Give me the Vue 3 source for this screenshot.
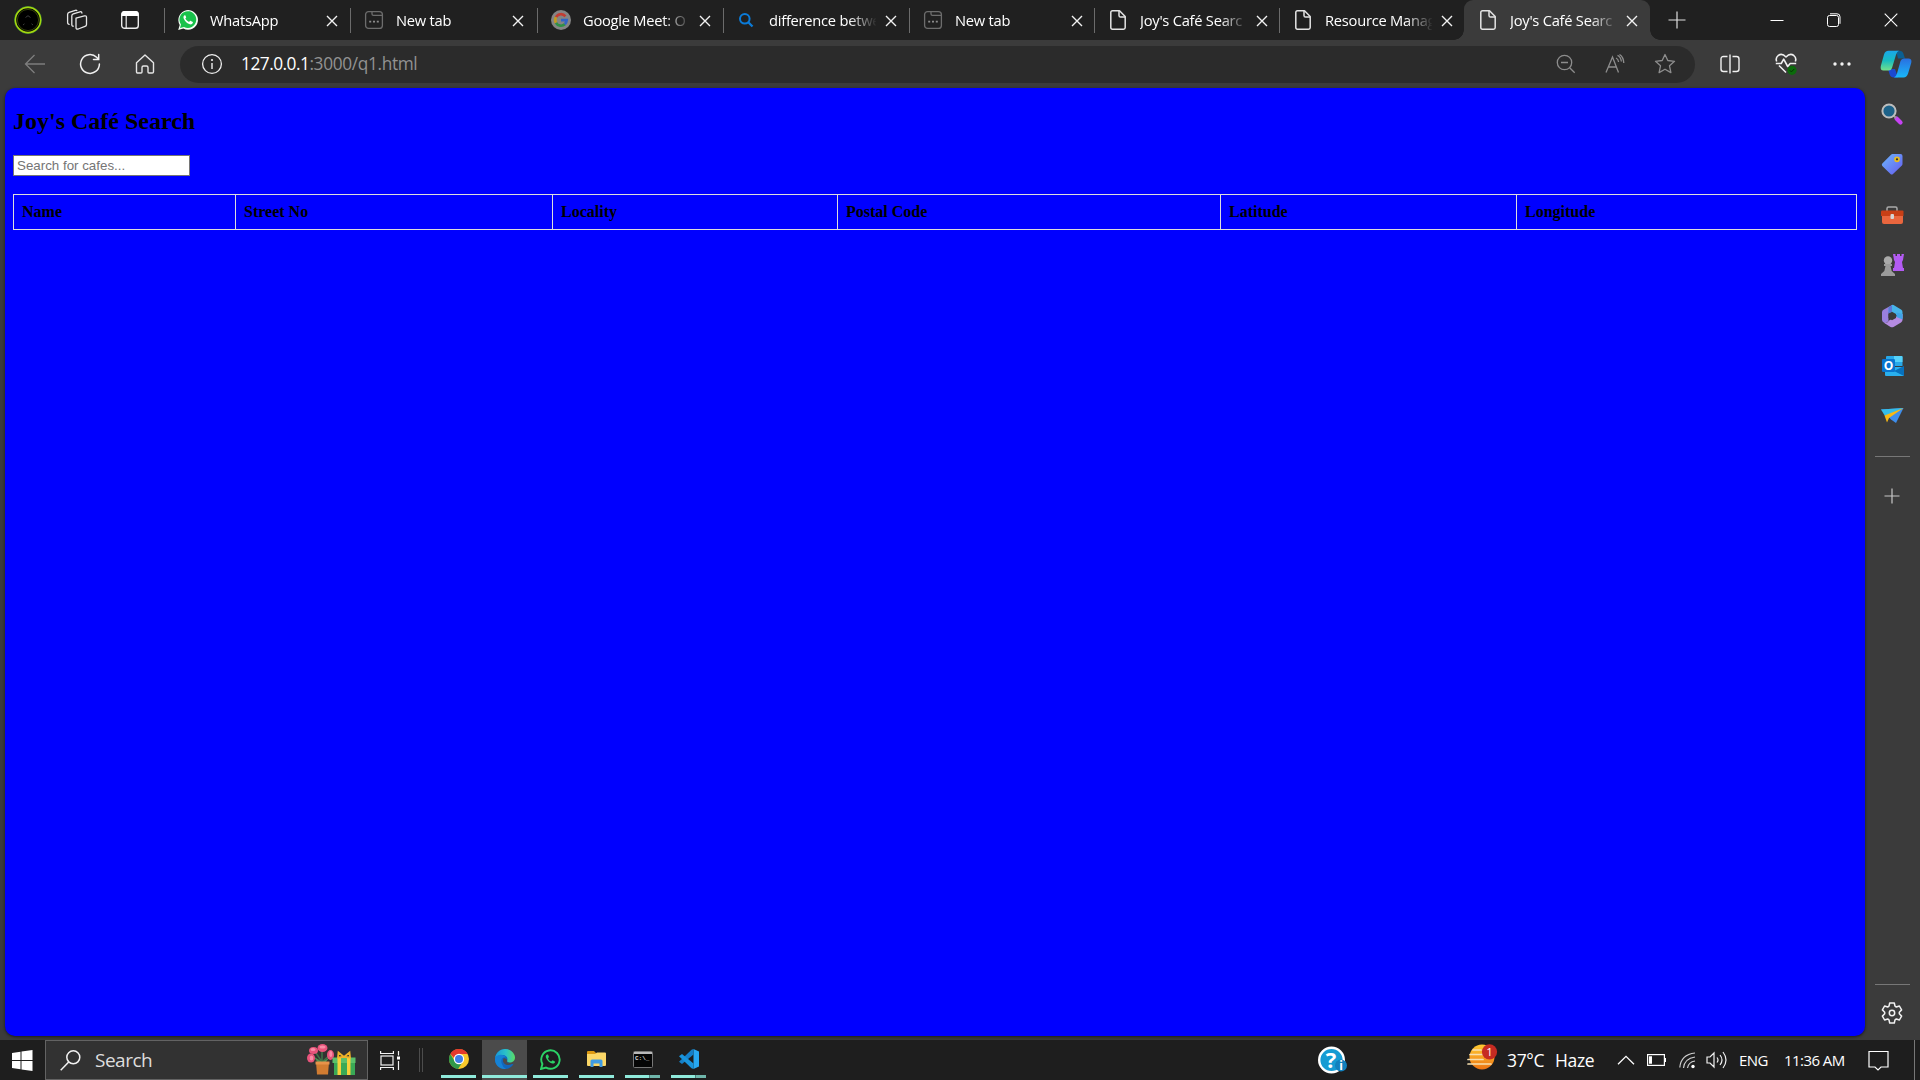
<script setup>
const tabs = [
  { title: 'WhatsApp', icon: 'whatsapp', width: 186 },
  { title: 'New tab', icon: 'newtab', width: 187 },
  { title: 'Google Meet: O', icon: 'google', width: 186 },
  { title: 'difference betwe', icon: 'search', width: 186 },
  { title: 'New tab', icon: 'newtab', width: 185 },
  { title: "Joy's Café Searc", icon: 'file', width: 185 },
  { title: 'Resource Manag', icon: 'file', width: 185 },
  { title: "Joy's Café Searc", icon: 'file', width: 186, active: true },
]
const columns = [
  { label: 'Name', width: 222 },
  { label: 'Street No', width: 317 },
  { label: 'Locality', width: 285 },
  { label: 'Postal Code', width: 383 },
  { label: 'Latitude', width: 296 },
  { label: 'Longitude', width: 340 },
]
</script>

<template>
  <div class="screen">
    <header class="titlebar">
      <div class="left-tools">
        <svg class="avatar" width="30" height="30" viewBox="0 0 30 30">
          <circle cx="15" cy="15" r="13.6" fill="#0c0f04" stroke="#2c6b3c" stroke-width="1" />
          <circle cx="15" cy="15" r="12.6" fill="#050505" stroke="#a5d80f" stroke-width="1.6" />
          <circle cx="15" cy="15" r="10.6" fill="#000" stroke="#35420b" stroke-width="1" />
          <path d="M12.500 12.500l2.500-1.800 2.500 1.800M10 20l1.500-1.200M20 20l-1.500-1.200" stroke="#3c3c3c" fill="none" />
        </svg>
        <svg class="workspaces" width="22" height="22" viewBox="0 0 22 22" fill="none" stroke="#e6e6e6" stroke-width="1.3" stroke-linejoin="round" stroke-linecap="round">
          <path d="M10 9.200l8.400-2.300q2.100-.4 2.100 1.400v7.100q0 1.500-1.500 2l-6.800 2.600q-2.200.6-2.200-1.500z" />
          <path d="M7.300 17.200q-1.500.1-1.500-1.600V6.900q0-1.500 1.500-2l6.600-2.100q1.700-.4 2 1.200" />
          <path d="M3.200 15.300q-1.600 0-1.600-1.700V5.400q0-1.500 1.500-2l6.200-2q1-.3 1.500.1" />
        </svg>
        <svg class="tabactions" width="20" height="20" viewBox="0 0 20 20">
          <rect x="1.7" y="1.7" width="16.6" height="16.6" rx="2.8" fill="none" stroke="#ececec" stroke-width="1.4" />
          <path d="M1.500 6V4q0-3 3-3h11q3 0 3 3v2z" fill="#fff" />
          <path d="M6.200 6v12" stroke="#ececec" stroke-width="1.2" />
        </svg>
      </div>
      <div v-for="(tab, i) in tabs" :key="i" class="tab" :class="{ active: tab.active }" :style="{ width: tab.width + 'px' }">
        <svg v-if="tab.icon === 'whatsapp'" class="favicon" viewBox="0 0 20 20">
          <path d="M.2 19.900l1.500-5A9.800 9.800 0 1 1 5.400 18.500z" fill="#f4fff6" />
          <path d="M2 18l1-3.600a8.400 8.400 0 1 1 3 2.600z" fill="#18c24b" />
          <path d="M6.700 5.200c-1.200.5-1.500 1.900-1 3.200 1.200 3 3.500 5 6.200 5.900 1.500.4 2.800-.4 3-1.700.1-.5-.1-.7-.5-.9l-1.700-.8c-.4-.2-.7-.1-.9.200l-.7.9c-1.700-.6-3-1.800-3.800-3.400l.7-.9c.2-.3.2-.5.1-.8L7.400 5.400c-.1-.2-.3-.3-.7-.2z" fill="#fff" />
        </svg>
        <svg v-else-if="tab.icon === 'newtab'" class="favicon" viewBox="0 0 20 20" fill="none" stroke="#6d6d6d" stroke-width="1.3">
          <rect x="1.6" y="1.6" width="16.8" height="16.8" rx="3" />
          <path d="M8 1.600v2.400q0 1.400 1.400 1.400h9" />
          <path d="M5.200 11.600h2M9 11.600h2M12.800 11.600h2" stroke="#8b8b8b" stroke-width="1.8" />
        </svg>
        <svg v-else-if="tab.icon === 'google'" class="favicon" viewBox="0 0 20 20" fill="none" stroke-width="2.7">
          <circle cx="10" cy="10" r="10" fill="#858585" />
          <path d="M14.400 6.300A5.700 5.700 0 0 0 5 7.200" stroke="#c33c32" />
          <path d="M5 7.200a5.700 5.700 0 0 0 0 5.600" stroke="#c29a20" />
          <path d="M5 12.800a5.700 5.700 0 0 0 8.800 1.500" stroke="#2f9146" />
          <path d="M10 10.200h5.700q-.2 2.600-1.900 4.100" stroke="#3264c6" />
        </svg>
        <svg v-else-if="tab.icon === 'search'" class="favicon search-favicon" viewBox="0 0 20 20" fill="none" stroke="#0b7bd8" stroke-width="2">
          <circle cx="8.8" cy="8.8" r="4.8" />
          <path d="M12.300 12.300l4.200 4.200" stroke-width="2.3" />
        </svg>
        <svg v-else class="favicon" viewBox="0 0 20 20" fill="none" stroke="#e4e4e4" stroke-width="1.5" stroke-linejoin="round">
          <path d="M4.500.8h7L17.200 6.500v11q0 1.700-1.700 1.700h-11q-1.700 0-1.700-1.700v-15Q2.800.8 4.500.8z" />
          <path d="M11 1v4.400q0 1.600 1.600 1.600H17" />
        </svg>
        <span class="tab-title">{{ tab.title }}</span>
        <svg class="close" width="12" height="12" viewBox="0 0 12 12"><path d="M1 1l10 10M11 1L1 11" stroke="#f2f2f2" stroke-width="1.4" /></svg>
      </div>
      <svg class="newtab" width="18" height="18" viewBox="0 0 18 18"><path d="M9 .5v17M.5 9h17" stroke="#e0e0e0" stroke-width="1.2" /></svg>
      <div class="window-controls">
        <svg width="14" height="14" viewBox="0 0 14 14"><path d="M.5 7.500h13" stroke="#fff" /></svg>
        <svg width="14" height="14" viewBox="0 0 14 14" fill="none" stroke="#fff"><rect x=".5" y="2.5" width="11" height="11" rx="2" /><path d="M3 .8h7q3 0 3 3v7" /></svg>
        <svg width="14" height="14" viewBox="0 0 14 14"><path d="M.7.7l12.600 12.600M13.300.7L.7 13.300" stroke="#fff" stroke-width="1.1" /></svg>
      </div>
    </header>

    <div class="toolbar">
      <svg class="back" width="22" height="20" viewBox="0 0 22 20" fill="none" stroke="#7e7e7e" stroke-width="1.3"><path d="M21 10H1.500M10.500 1L1.500 10l9 9" /></svg>
      <svg class="reload" width="22" height="22" viewBox="0 0 22 22" fill="none" stroke="#f0f0f0" stroke-width="1.5" stroke-linecap="round"><path d="M20.400 11A9.400 9.400 0 1 1 17.600 4.300l1.900 1.900M19.700 1.500v5h-5.200" /></svg>
      <svg class="home" width="20" height="20" viewBox="0 0 20 20" fill="none" stroke="#e6e6e6" stroke-width="1.4" stroke-linejoin="round"><path d="M1.500 8.700L10 1l8.500 7.700v9q0 1.300-1.300 1.300h-3.200q-1 0-1-1v-4.500q0-1.500-1.500-1.500h-3Q7 12 7 13.500V18q0 1-1 1H2.800q-1.300 0-1.300-1.300z" /></svg>
      <div class="address">
        <svg class="info" width="22" height="22" viewBox="0 0 22 22"><circle cx="11" cy="11" r="9.4" fill="none" stroke="#efefef" stroke-width="1.3" /><path d="M11 10v6" stroke="#efefef" stroke-width="1.4" /><circle cx="11" cy="7" r="1.1" fill="#efefef" /></svg>
        <span class="url"><b>127.0.0.1</b><i>:3000/q1.html</i></span>
        <div class="address-icons">
          <svg width="20" height="20" viewBox="0 0 20 20" fill="none" stroke="#8d8d8d" stroke-width="1.3"><circle cx="8.5" cy="8.5" r="7.2" /><path d="M5 8.500h7M13.700 13.700l5 5" /></svg>
          <svg width="20" height="20" viewBox="0 0 20 20" fill="none" stroke="#8d8d8d" stroke-width="1.3"><path d="M1 18.500L7.500 3l6 15.500M3.300 13h8.200M11 4q2.300 1 2.600 4M12.500 1.300q3.300 1.500 3.900 6.200M14.500.5q4 2.500 4.300 8.500" /></svg>
          <svg width="22" height="22" viewBox="0 0 22 22" fill="none" stroke="#8d8d8d" stroke-width="1.3" stroke-linejoin="round"><path d="M11 1.500l2.800 6 6.700.8-5 4.500 1.400 6.800-5.900-3.400-5.900 3.400 1.400-6.800-5-4.500 6.700-.8z" /></svg>
        </div>
      </div>
      <svg class="split" width="20" height="20" viewBox="0 0 20 20" fill="none" stroke="#f0f0f0" stroke-width="1.4"><path d="M7.500 2.500h-4Q1 2.500 1 5v10q0 2.500 2.500 2.500h4M12.500 2.500h4Q19 2.500 19 5v10q0 2.500-2.500 2.500h-4M10 .5v19" /></svg>
      <svg class="health" width="22" height="22" viewBox="0 0 22 22" fill="none" stroke="#f0f0f0" stroke-width="1.6" stroke-linejoin="round"><path d="M1.700 8.500Q.2 5 3.200 2.500 7-.2 11 4q4-4.200 7.800-1.500 3 2.500 1.500 6M.8 10.500h5.400l2.500-4.300 4 7.300 2.500-3h6M4 12.500l7 7" /><circle cx="17" cy="17.3" r="4.6" fill="#0b6b0b" stroke="none" /><path d="M14.800 17.300l1.600 1.600 3-3" stroke="#062f06" stroke-width="1" /></svg>
      <svg class="more" width="18" height="6" viewBox="0 0 18 6" fill="#f2f2f2"><circle cx="2" cy="3" r="1.7" /><circle cx="9" cy="3" r="1.7" /><circle cx="16" cy="3" r="1.7" /></svg>
      <svg class="copilot" width="32" height="28" viewBox="0 0 32 28">
        <defs>
          <linearGradient id="cpa" x1="0" y1="0" x2="0" y2="1"><stop offset="0" stop-color="#1aa7ea" /><stop offset=".5" stop-color="#18bcc0" /><stop offset="1" stop-color="#74e08a" /></linearGradient>
          <linearGradient id="cpb" x1="0" y1="0" x2="0" y2="1"><stop offset="0" stop-color="#2a6fe0" /><stop offset="1" stop-color="#19b8fa" /></linearGradient>
        </defs>
        <path d="M16 .8h4q2.500 0 3.300 2.500L25 8.500h-7z" fill="#0b5f92" />
        <path d="M8 19h7l3 8.500h-4q-3.500 0-4.300-3z" fill="#1b49d0" />
        <path d="M8.500.8H19q-2 .6-3 4L12 18q-.8 2.500-3.500 2.500h-5Q0 20.500.8 16L4 4.500Q5.200.8 8.500.8z" fill="url(#cpa)" />
        <path d="M23.500 27.500H14q2-.6 3-4L20.500 11q.8-2.500 3.500-2.500h4.500q3.700 0 2.700 4.500L28 23.800q-1.200 3.700-4.500 3.700z" fill="url(#cpb)" />
      </svg>
    </div>

    <div class="middle">
      <main class="page">
        <h2>Joy's Café Search</h2>
        <input type="text" placeholder="Search for cafes..." />
        <table>
          <colgroup><col v-for="c in columns" :key="c.label" :style="{ width: c.width + 'px' }" /></colgroup>
          <thead><tr><th v-for="c in columns" :key="c.label">{{ c.label }}</th></tr></thead>
        </table>
      </main>
      <aside class="sidebar">
        <svg width="24" height="24" viewBox="0 0 24 24"><path d="M16.500 16.500l4 4" stroke="#c742f5" stroke-width="4.2" stroke-linecap="round" /><path d="M13 13l3 3" stroke="#999" stroke-width="2" /><circle cx="9" cy="9" r="6.6" fill="#1d6289" stroke="#bdbdbd" stroke-width="2" /></svg>
        <svg width="24" height="24" viewBox="0 0 24 24"><defs><linearGradient id="tag" x1="0" y1="0" x2="1" y2="1"><stop offset="0" stop-color="#6cb8fb" /><stop offset="1" stop-color="#655af0" /></linearGradient></defs><path d="M12.500 2h8q2 0 2 2v8q0 .8-.6 1.500L13 22q-1.300 1-2.500 0L2.300 14q-1-1.200 0-2.400L11 2.700q.6-.7 1.500-.7z" fill="url(#tag)" /><circle cx="17" cy="7.3" r="2" fill="#333" stroke="#e8bd20" stroke-width="1.7" /></svg>
        <svg width="24" height="24" viewBox="0 0 24 24"><path d="M7 8V5.500q0-1.500 1.500-1.500h7Q17 4 17 5.500V8" fill="none" stroke="#aaa" stroke-width="1.5" /><path d="M2 12h21v7q0 2-2 2H4q-2 0-2-2z" fill="#e9663e" /><path d="M2.500 7.500h20q1 0 1 1V13H1V8.500q0-1 1.500-1z" fill="#c83f16" /><rect x="10.5" y="11" width="3.5" height="5" rx="1" fill="#d5d5d5" /></svg>
        <svg width="24" height="24" viewBox="0 0 24 24"><path d="M13 1h2.500v2H17V1h3v2h1.500V1H24l-1 6-1 2 1 6h1v3H13v-3h1l1-6-1-2z" fill="#b35bf3" /><circle cx="8" cy="7.5" r="4.2" fill="#aaa" /><path d="M4 11h8v2h-1.500l1.200 5L15 21v2H1v-2l3.300-3 1.200-5H4z" fill="#9b9b9b" /></svg>
        <svg width="24" height="24" viewBox="0 0 24 24"><path d="M12 1L3.500 5.700Q2 6.600 2 8.200v7.600q0 1.600 1.500 2.500l1.800 1 3.200-2V8.700L16 4z" fill="#9a80de" /><path d="M12 1q.8-.3 1.600.1l7.400 4.300q1.500.9 1.500 2.500v6.300L16.500 11 8.500 8V4z" fill="#46b4ea" /><path d="M8.500 3.500L12 1v6.500L8.500 10z" fill="#5d78d6" /><path d="M22.500 10v6q0 1.500-1.500 2.400l-7.500 4.500q-1.500.8-3 0l-7-4.500q4 1.500 5.500-2l7.500-4z" fill="#b58be2" /><path d="M16.500 8.500l6 1.500v5.500l-6-2.500z" fill="#3fa4e8" /><path d="M12 7.800l4 2.200v4L12 16.200 8.500 14v-4z" fill="#3b3b3b" /></svg>
        <svg width="24" height="24" viewBox="0 0 24 24"><path d="M7 2h14.500q1 0 1 1v9H6V3q0-1 1-1z" fill="#28a8e8" /><path d="M14 2h7.500q1 0 1 1v5H14z" fill="#55d2fa" /><path d="M5 13h19v8q0 1-1 1H6q-1 0-1-1z" fill="#29b0ee" /><path d="M24 12v10L14 17z" fill="#0870bc" /><rect x="2" y="5" width="13" height="13" rx="1.3" fill="#0875cf" /><text x="8.5" y="15.8" text-anchor="middle" class="outlook-letter">O</text></svg>
        <svg width="24" height="24" viewBox="0 0 24 24"><path d="M1 5.500L23.500 4 16 19l-5-3.500z" fill="#3e8eed" /><path d="M1 5.500L23.500 4 5 12z" fill="#35bde8" /><path d="M4.500 11.500L23.500 4 9 14l-2 4.500z" fill="#f9b914" /></svg>
        <hr />
        <svg class="add" width="16" height="16" viewBox="0 0 16 16"><path d="M8 .5v15M.5 8h15" stroke="#c8c8c8" stroke-width="1.2" /></svg>
        <hr class="bottom-rule" />
        <svg class="gear" width="22" height="22" viewBox="0 0 22 22" fill="none" stroke="#f2f2f2" stroke-width="1.5" stroke-linejoin="round"><path d="M8.700 1h4.600l.7 3.200 1.300.8 3.100-1 2.200 3.900-2.300 2.300v1.600l2.300 2.300-2.200 3.900-3.100-1-1.300.8-.7 3.200H8.700L8 17.800 6.700 17l-3.100 1-2.200-3.900 2.300-2.300v-1.600L1.400 7.900 3.600 4l3.100 1L8 4.200z" /><circle cx="11" cy="11" r="2.7" /></svg>
      </aside>
    </div>

    <footer class="taskbar">
      <div class="start"><svg width="21" height="21" viewBox="0 0 21 21" fill="#fff"><path d="M0 3l8.500-1.300V10H0zM9.500 1.500L20.500 0v10h-11zM0 11h8.500v8.300L0 18zM9.500 11h11v10l-11-1.500z" /></svg></div>
      <div class="search">
        <svg class="glass" width="21" height="21" viewBox="0 0 21 21" fill="none" stroke="#f2f2f2" stroke-width="1.5"><circle cx="13.3" cy="7.3" r="6.5" /><path d="M8.700 12L.7 20.300" /></svg>
        <span>Search</span>
        <svg class="flowers" width="50" height="32" viewBox="0 0 50 32">
          <g stroke="#3f7448" stroke-width="1.5" fill="none"><path d="M14 18L5 12M15 18L7 6M15 18V5M15 18l9-8" /></g>
          <path d="M7 13l8 5 8-5-5 6h-7z" fill="#4f9053" />
          <g fill="#e8547c"><ellipse cx="6.5" cy="6.5" rx="4.5" ry="3.5" /><ellipse cx="15.5" cy="4" rx="5" ry="4" /><ellipse cx="4" cy="14" rx="4" ry="4.5" /><ellipse cx="23.5" cy="11" rx="3.5" ry="5" /></g>
          <g fill="#f78ca5"><ellipse cx="6" cy="5.5" rx="2.5" ry="1.5" /><ellipse cx="15.5" cy="3" rx="3" ry="1.5" /><ellipse cx="4.5" cy="14" rx="1.8" ry="2.5" /><ellipse cx="23.8" cy="10" rx="1.5" ry="3" /></g>
          <path d="M9 18h13l-1 12.500H10z" fill="#d17c31" /><path d="M8.500 17.500h14v3h-14z" fill="#e6934a" />
          <path d="M27 17h21v14H27z" fill="#39a956" /><path d="M25.500 13.500h23v5.500h-23z" fill="#5bc06a" />
          <path d="M30.500 13.500h3.500V31h-3.500zM40 13.500h3.500V31H40z" fill="#f6cf3b" />
          <path d="M37 13l-5.500-4.500-.5 5zM37 13l5.500-4.500.5 5z" fill="none" stroke="#efb428" stroke-width="1.8" />
        </svg>
      </div>
      <svg class="taskview" width="23" height="21" viewBox="0 0 23 21" fill="none" stroke="#f2f2f2" stroke-width="1.2"><rect x="1" y="6" width="12" height="9" /><path d="M.6 1v2.500h12.800V1M.6 20v-2.500h12.800V20M18.500 1v4.500M18.500 11v9" /><path d="M17 6.500h3v3h-3z" fill="#fff" stroke="none" /></svg>
      <div class="grip"></div>
      <div class="apps">
        <div class="app"><svg width="20" height="20" viewBox="0 0 20 20"><circle cx="10" cy="10" r="10" fill="#f9c82b" /><path d="M1.300 5A10 10 0 0 1 18.700 5H10L7 11z" fill="#e4392c" /><path d="M1.300 5A10 10 0 0 0 9 20l5-7.500-8 0z" fill="#30984a" /><circle cx="10" cy="10" r="5.2" fill="#fff" /><circle cx="10" cy="10" r="4" fill="#3f7ee8" /></svg></div>
        <div class="app current"><svg width="20" height="20" viewBox="0 0 20 20"><defs><linearGradient id="edge" x1="0" y1="0" x2="1" y2="0"><stop offset="0" stop-color="#1897d8" /><stop offset=".55" stop-color="#2bc2c8" /><stop offset="1" stop-color="#5bdd62" /></linearGradient></defs><circle cx="10" cy="10" r="10" fill="#1267bd" /><path d="M20 8.500v5l-1.500 1.500-4 .2-2-3z" fill="#4b4b4b" /><path d="M0 9.500C.5 4 5 0 10 0c6 0 10 4.500 10 8.500 0 3.500-2.500 5-5 5-2 0-3.500-.5-3-1.500C13.500 9 11 6 7.500 6 4 6 1 7.500 0 9.500z" fill="url(#edge)" /><path d="M8.800 9c-2.600 3.500 1.200 8 6 6.800l3-1.300q-5.500 1-5.800-2.500 1-2-3.200-3z" fill="#4b4b4b" /><path d="M0 9.500C1.500 5 9 4.500 11 8.500 8 7.500 5.500 10 6.500 14q1 4 4.500 6C4 20.500-.5 15 0 9.500z" fill="#1682d5" /></svg></div>
        <div class="app"><svg width="21" height="21" viewBox="0 0 21 21"><path d="M1 20l1.400-5A9.200 9.200 0 1 1 6 18.600z" fill="none" stroke="#2bd366" stroke-width="1.9" /><path d="M7 5.500c-1.200.5-1.500 1.900-1 3.200 1.200 3 3.500 4.900 6.200 5.700 1.500.4 2.800-.4 3-1.700l-2.500-1.500-1.500 1.300C9.500 12 8.700 11 8 9.200l1-1.300-1-2.400z" fill="#2bd366" /></svg></div>
        <div class="app"><svg width="19" height="18" viewBox="0 0 19 18"><path d="M0 2q0-1 1-1h6l2 2v3H0z" fill="#dd9a12" /><path d="M0 4h8l2-1.500h8q1 0 1 1V15q0 1-1 1H1q-1 0-1-1z" fill="#fbd767" /><path d="M3.500 17v-6q0-1.500 1.500-1.500h9q1.500 0 1.500 1.500v6h-3v-3.500h-6V17z" fill="#3f9be3" /></svg></div>
        <div class="app split-app"><svg width="20" height="17" viewBox="0 0 20 17"><rect x=".5" y=".5" width="19" height="16" rx="1" fill="#050505" stroke="#777" /><path d="M1 1h18v2H1z" fill="#b9b9b9" /><text x="2" y="9" class="cmd-text">C:\_</text></svg></div>
        <div class="app split-app"><svg width="20" height="20" viewBox="0 0 20 20"><path d="M14.500 0L20 2.500v15L14.500 20z" fill="#27a8f2" /><path d="M14.500 0v5.500L3 15 0 12.700 12.500.7z" fill="#1580c8" /><path d="M14.500 20v-5.500L3 5 0 7.300l12.500 12z" fill="#1994dc" /></svg></div>
      </div>
      <svg class="help" width="30" height="28" viewBox="0 0 30 28"><circle cx="13.5" cy="14" r="12.3" fill="#159bd3" stroke="#fff" stroke-width="2.4" /><text x="13" y="22" text-anchor="middle" class="help-mark">?</text><circle cx="23" cy="19.5" r="6" fill="#1180bd" /><text x="23" y="24" text-anchor="middle" class="help-info">i</text></svg>
      <svg class="haze" width="31" height="27" viewBox="0 0 31 27"><defs><linearGradient id="sun" x1="0" y1="0" x2="0" y2="1"><stop offset="0" stop-color="#ffcb32" /><stop offset="1" stop-color="#ee7412" /></linearGradient></defs><circle cx="15" cy="13" r="12.5" fill="url(#sun)" /><path d="M6 6h8M3 10.500h14M1 15.500h15M1 20h23" stroke="#f7dfae" stroke-width="1.7" stroke-linecap="round" /><circle cx="22.5" cy="7.8" r="7.6" fill="#c62b22" /><text x="22.5" y="12" text-anchor="middle" class="badge-text">1</text></svg>
      <span class="weather temp">37°C</span><span class="weather cond">Haze</span>
      <svg class="chev" width="18" height="10" viewBox="0 0 18 10"><path d="M1 9.300l8-8 8 8" fill="none" stroke="#fff" stroke-width="1.3" /></svg>
      <svg class="battery" width="20" height="12" viewBox="0 0 20 12"><rect x=".6" y=".6" width="16.8" height="10.8" fill="none" stroke="#fff" stroke-width="1.2" /><path d="M2 2.200h3v7.600H2zM18 4h1v4h-1z" fill="#fff" /></svg>
      <svg class="wifi" width="17" height="17" viewBox="0 0 17 17" fill="none" stroke="#cfcfcf" stroke-width="1.2"><path d="M.8 15.500Q2 2.500 16 1M4.500 16Q5.500 6.500 16 5M8.500 16Q9.500 10 16 9" /><circle cx="14" cy="14.5" r="1.7" fill="#fff" stroke="none" /></svg>
      <svg class="sound" width="21" height="18" viewBox="0 0 21 18" fill="none" stroke="#f0f0f0" stroke-width="1.2"><path d="M1 6h3l4-4v14l-4-4H1zM11 6.500q2 2.500 0 5M14 4q4 5 0 10M17 1q6 8 0 16" /></svg>
      <span class="lang">ENG</span>
      <span class="clock">11:36 AM</span>
      <svg class="notify" width="21" height="21" viewBox="0 0 21 21"><path d="M1 1.500h19v15.500h-7l-3 3-3-3H1z" fill="none" stroke="#fff" stroke-width="1.2" /></svg>
      <div class="desktop-edge"></div>
    </footer>
  </div>
</template>

<style>
body { background: #3b3b3b; overflow: hidden; }
</style>

<style scoped>
.screen { width: 1920px; height: 1080px; display: flex; flex-direction: column; background: #3b3b3b; font-family: "Open Sans", "Noto Sans", sans-serif; color: #fff; overflow: hidden; }
svg { display: block; flex: none; }
.titlebar { height: 40px; flex: none; display: flex; align-items: center; background: #202020; }
.left-tools { width: 164px; flex: none; display: flex; align-items: center; padding-left: 13px; box-sizing: border-box; }
.workspaces { margin-left: 23px; }
.tabactions { margin-left: 32px; }
.tab { height: 40px; flex: none; position: relative; display: flex; align-items: center; box-sizing: border-box; padding-left: 14px; }
.tab::before { content: ""; position: absolute; left: 0; top: 8px; width: 1px; height: 25px; background: #6b6b6b; }
.tab.active::before { left: -10px; top: auto; bottom: 0; width: 206px; height: 10px; background: radial-gradient(circle at 0 0, transparent 9.5px, #3b3b3b 10px) left / 10px 10px no-repeat, radial-gradient(circle at 100% 0, transparent 9.5px, #3b3b3b 10px) right / 10px 10px no-repeat; }
.tab.active { background: #3b3b3b; border-radius: 9px 9px 0 0; }
.favicon { width: 20px; height: 20px; }
.search-favicon { margin-left: -1px; margin-right: 1px; }
.tab-title { width: 107px; margin-left: 12px; margin-top: -1px; white-space: nowrap; font-size: 14.7px; line-height: 24px; letter-spacing: -0.25px; -webkit-mask-image: linear-gradient(90deg, #000 80px, transparent 108px); mask-image: linear-gradient(90deg, #000 80px, transparent 108px); }
.close { margin-left: 9px; margin-top: 1px; }
.newtab { margin-left: 18px; }
.window-controls { margin-left: 84px; display: flex; gap: 43px; }
.toolbar { height: 48px; flex: none; display: flex; align-items: center; }
.back { margin-left: 24px; margin-bottom: 1px; }
.reload { margin-left: 33px; }
.home { margin-left: 34px; }
.address { margin-left: 25px; width: 1515px; height: 37px; border-radius: 19px; background: #2b2b2b; display: flex; align-items: center; box-sizing: border-box; padding-left: 21px; }
.url { margin-left: 18px; font-size: 17.3px; line-height: 26px; white-space: nowrap; }
.url b { font-weight: 400; letter-spacing: -0.5px; }
.url i { font-style: normal; color: #929292; letter-spacing: -0.35px; }
.address-icons { display: flex; align-items: center; margin-left: auto; gap: 29px; margin-right: 19px; }
.split { margin-left: 25px; }
.health { margin-left: 35px; }
.more { margin-left: 36px; }
.copilot { margin-left: 29px; }
.middle { height: 952px; flex: none; display: flex; padding-left: 5px; box-sizing: border-box; }
.page { width: 1860px; height: 948px; border-radius: 10px; background: #00f; box-sizing: border-box; padding: 19px 8px 0; color: #000; font-family: "Liberation Serif", serif; font-size: 16px; box-shadow: 0 1px 3px #1c1c1c; }
h2 { margin: 0 0 20px; font-size: 24px; line-height: 28px; }
input { display: block; box-sizing: border-box; width: 177px; height: 21px; border: 1px solid #767676; border-radius: 0; padding: 1px 3px; font: 13.333px "Liberation Sans", sans-serif; background: #fff; }
input::placeholder { color: #757575; opacity: 1; }
table { margin-top: 18px; width: 1844px; table-layout: fixed; border-collapse: collapse; }
th { border: 1px solid #ddd; padding: 8px; height: 18px; line-height: 18px; text-align: left; }
.sidebar { width: 53px; display: flex; flex-direction: column; align-items: center; padding-top: 14px; box-sizing: border-box; gap: 26.4px; }
.sidebar hr { width: 35px; height: 1px; border: 0; margin: 1.5px 0 0 1px; background: #777; }
.sidebar .add { margin-top: 4px; }
.sidebar .bottom-rule { margin-top: auto; }
.sidebar .gear { margin: -9px 0 16px; }
.outlook-letter { font: 700 12px "Open Sans", sans-serif; fill: #fff; }
.taskbar { height: 40px; flex: none; display: flex; align-items: center; background: #1e1e1e; }
.start { width: 45px; flex: none; display: flex; justify-content: center; box-sizing: border-box; }
.search { width: 323px; height: 40px; flex: none; box-sizing: border-box; border: 1px solid #636363; background: #323232; display: flex; align-items: center; padding-left: 14px; font-size: 19px; letter-spacing: -0.5px; color: #dedede; }
.search span { margin-left: 14px; }
.flowers { margin-left: auto; margin-right: 10px; }
.taskview { margin-left: 12px; }
.grip { width: 2px; height: 24px; margin-left: 16px; border: solid #4c4c4c; border-width: 0 1px; }
.apps { display: flex; margin-left: 13px; gap: 1px; }
.app { width: 45px; height: 40px; display: flex; align-items: center; justify-content: center; position: relative; padding-bottom: 2px; box-sizing: border-box; }
.app::after { content: ""; position: absolute; left: 5px; bottom: 2px; width: 35px; height: 3px; background: #8feadb; }
.app.current { background: #4b4b4b; }
.app.current::after { left: 0; width: 45px; }
.split-app::after { background: linear-gradient(90deg, #8feadb 24px, #4d817b 24px, #4d817b 25px, #6fb6ab 25px); }
.cmd-text { font: 700 6px "Liberation Mono", monospace; fill: #ddd; }
.help { margin-left: 607px; }
.help-mark { font: 700 22px "Open Sans", sans-serif; fill: #fff; }
.help-info { font: 700 12px "Open Sans", sans-serif; fill: #fff; }
.haze { margin-left: 119px; margin-bottom: 5px; }
.badge-text { font: 11.5px "Open Sans", sans-serif; fill: #fff; }
.weather { font-size: 17.5px; line-height: 26px; white-space: nowrap; letter-spacing: -0.35px; }
.temp { margin-left: 9px; width: 48px; }
.cond { width: 60px; }
.chev { margin-left: 2px; }
.battery { margin-left: 12px; }
.wifi { margin-left: 12px; }
.sound { margin-left: 10px; }
.lang { margin-left: 12px; width: 45px; font-size: 15px; letter-spacing: -0.6px; }
.clock { width: 70px; font-size: 15px; letter-spacing: -0.55px; white-space: nowrap; }
.notify { margin-left: 14px; }
.desktop-edge { margin-left: auto; width: 5px; height: 40px; border-left: 1px solid #777; }
</style>
